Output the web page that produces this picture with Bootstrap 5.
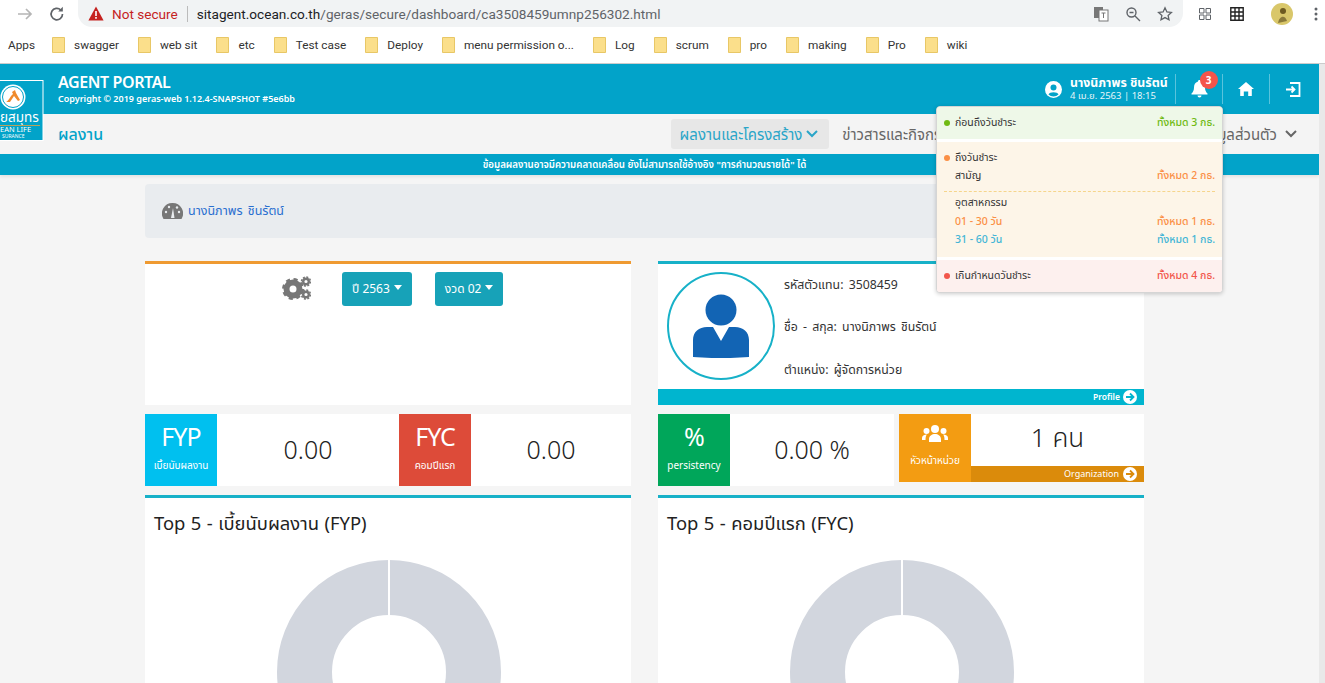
<!DOCTYPE html>
<html lang="th">
<head>
<meta charset="utf-8">
<title>Agent Portal</title>
<link href="https://cdn.jsdelivr.net/npm/bootstrap@5.3.0/dist/css/bootstrap.min.css" rel="stylesheet">
<style>
html,body{height:683px;overflow:hidden}
body{font-family:"Noto Sans","Noto Sans Thai","Open Sans","Liberation Sans",sans-serif;background:#f5f5f5;color:#333;font-size:13px;position:relative}
.chrome-top{height:32px;background:#fff;padding-left:15px}
.chrome-pill{margin-left:11px;width:1105px;height:27px;background:#f1f3f4;border-radius:0 0 14px 14px;padding:0 10px;font:13.6px Roboto,sans-serif;color:#5f6368}
.chrome-pill b{font-weight:400;color:#202124}
.notsec{color:#c5221f}
.sep-v{width:1px;height:16px;background:#bbb;margin:0 9px}
.bmbar{height:32px;background:#fff;border-bottom:1px solid #ccc;padding-left:8px;font:11.8px Roboto,sans-serif;color:#333;padding-bottom:5px}
.bmitem{gap:9px;margin-left:19px}
.appwrap{height:619px;position:relative}
.appmain{flex:1 1 auto;min-width:0;height:619px;overflow:hidden}
.scrolltrack{width:6px;background:#e9e9e9;height:619px}
.tophead{height:50px;background:#02a3c9;color:#fff;padding-left:58px;padding-right:3px}
.brand-t{font-size:16px;font-weight:600;line-height:20px;letter-spacing:-.4px}
.brand-s{font-size:9px;font-weight:600;line-height:14px}
.usr-name{font-size:12.3px;font-weight:700;line-height:14px}
.usr-date{font-size:9.5px;line-height:12px;opacity:.9}
.hd-cell{width:47px;height:30px;border-left:1px solid rgba(255,255,255,.35)}
.bell-badge{position:absolute;left:9px;top:-9px;width:18px;height:18px;border-radius:50%;background:#f4544a;font-size:10px;font-weight:700;line-height:18px;text-align:center;color:#fff}
.subhead{height:40px;background:#f4f4f4;padding-left:58px;padding-right:22px}
.sub-title{color:#02a3c9;font-size:16px;font-weight:500}
.menu-act{background:#e7e7e7;border-radius:3px;height:30px;color:#2aa5c8;font-size:15px;padding:0 11px 0 9px;margin-right:13px;gap:4px}
.menu-it{color:#666;font-size:15px}
.menu-spacer{width:358px;overflow:hidden;white-space:nowrap}
.notice{height:21px;background:#02a3c9;color:#fff;font-size:9.7px;font-weight:600;text-align:center;line-height:21px;box-shadow:0 2px 3px rgba(0,0,0,.08);padding-right:30px}
.pagebox{width:999px;margin-left:145px}
.crumb{height:54px;background:#e9ecef;border-radius:4px;margin-top:9px;width:1030px;padding-left:17px;color:#2a6fd0;font-size:12.5px;gap:5px;word-spacing:2px}
.gridrow{--bs-gutter-x:27px;--bs-gutter-y:0}
.topcard{background:#fff;height:144px;margin-top:23px;border-top:3px solid #ef9a31}
.topcard2{border-top-color:#17b1c8;position:relative}
.btn-year{background:#17a2b8;color:#fff;font-size:12px;height:34px;padding:0 10px;border-radius:3px;border:0;--bs-btn-hover-bg:#17a2b8;--bs-btn-hover-color:#fff}
.btn-year::after{border-top-width:5px;border-left-width:4.500px;border-right-width:4.500px;margin-left:4px;vertical-align:3px}
.filter-row{padding-top:8px;padding-left:137px}
.ava{width:108px;height:108px;border:2px solid #17b1c8;border-radius:50%;margin:8px 9px 0 9px;flex:none}
.pf-lines{color:#333;font-size:12.3px;padding-top:12px;word-spacing:2px}
.pf-line{height:42.3px}
.pf-bar{position:absolute;left:0;right:0;bottom:0;height:16px;background:#00b5cf;color:#fff;font-size:8.5px;font-weight:600;padding-right:7px;gap:3px}
.statrow{margin-top:9px}
.statpanel{background:#fff;height:72px}
.statbox{width:72px;height:72px;color:#fff;flex:none;text-align:center}
.statbox .big{font-size:25px;line-height:28px;letter-spacing:-1px;margin-bottom:8px;padding-top:8px;box-sizing:content-box}
.statbox .sm{font-size:10px;line-height:14px;white-space:nowrap;margin:0 -3px}
.statnum{font-size:25px;color:#222;text-align:center;font-weight:300}
.c-fyp{background:#00c0ef}.c-fyc{background:#dd4b39}.c-per{background:#00a65a}.c-lead{background:#f39c12}
.w-half{width:254px;flex:none}
.w-rest{flex:1 1 auto}
.w236{width:236px;flex:none;margin-right:5px}
.leadpanel{height:68px;background:#fff}
.leadnum{flex:1 1 auto;font-size:26px;color:#222;line-height:1;font-weight:300;padding-bottom:6px}
.leadbar{height:16px;background:#db8b0b;color:#fff;font-size:9px;padding-right:7px;gap:4px}
.leadic{margin:9px 0 8px;height:22px}
.chartcard{background:#fff;margin-top:9px;border-top:3px solid #17b1c8;height:300px;text-align:center}
.charttitle{font-size:18.4px;word-spacing:.7px;color:#222;text-align:left;padding:12px 9px 0;line-height:26px;height:62px;margin:0;font-weight:400}
.donutsvg{display:block;margin-left:calc(50% - 111px)}
.duepop{position:absolute;left:936px;top:42px;width:287px;height:187px;background:#fff;border:1px solid #d5d5d5;border-radius:4px;box-shadow:0 1px 4px rgba(0,0,0,.2);overflow:hidden;font-size:10.5px;color:#333}
.due-g{height:32px;background:#eef8e8;padding:0 7px}
.due-o{height:115px;background:#fdf5e8;margin-top:3px;padding:8px 7px 0}
.due-r{height:32px;background:#fdf0ee;margin-top:3px;padding:0 7px}
.dot{width:6px;height:6px;border-radius:50%;display:inline-block;margin-right:5px}
.lineh{height:18px;padding-left:11px}
.lineh-tall{height:19px}
.dashsep{border-top:1px dashed #f6d58c;margin:5px 0 3px}
.tg{color:#6fba12}.to{color:#fb8f45}.tb{color:#43b5d6}.tr{color:#f2564b}
.fw-m{font-weight:500}
</style>
</head>
<body>
<div class="chrome-top d-flex align-items-start">
  <svg width="20" height="20" viewBox="0 0 20 20" class="mt-1" style="flex:none"><path d="M3 10h13M11 5l5 5-5 5" fill="none" stroke="#b5b5b5" stroke-width="1.7"/></svg>
  <svg width="20" height="20" viewBox="0 0 20 20" class="mt-1" style="flex:none;margin-left:12px"><path d="M15.5 10a5.7 5.7 0 1 1-1.700-4" fill="none" stroke="#5f6368" stroke-width="1.7"/><path d="M15.8 2.800v4.600h-4.600z" fill="#5f6368"/></svg>
  <div class="chrome-pill d-flex align-items-center">
    <svg width="16" height="15" viewBox="0 0 16 15"><path d="M8 .5 15.6 14.500H.4z" fill="#c5221f"/><path d="M7.2 5h1.600v5H7.2zM7.2 11h1.600v1.700H7.2z" fill="#fff"/></svg>
    <span class="notsec ms-2">Not secure</span><span class="sep-v"></span>
    <span><b>sitagent.ocean.co.th</b>/geras/secure/dashboard/ca3508459umnp256302.html</span>
    <div class="ms-auto d-flex align-items-center gap-3">
      <svg width="16" height="16" viewBox="0 0 16 16"><rect x="1" y="1" width="9" height="11" fill="#777"/><rect x="6" y="4" width="9" height="11" fill="#fff" stroke="#777"/><path d="M8.500 7h4M10.500 7v5" stroke="#777"/></svg>
      <svg width="16" height="16" viewBox="0 0 16 16"><circle cx="6.500" cy="6.500" r="4.500" fill="none" stroke="#5f6368" stroke-width="1.400"/><path d="m10 10 5 5M4.500 6.500h4" stroke="#5f6368" stroke-width="1.400"/></svg>
      <svg width="16" height="16" viewBox="0 0 16 16"><path d="m8 1.800 1.900 4.100 4.500.5-3.300 3 .9 4.400L8 11.600l-4 2.200.9-4.400-3.300-3 4.500-.5z" fill="none" stroke="#5f6368" stroke-width="1.300"/></svg>
    </div>
  </div>
  <div class="d-flex align-items-center ms-3" style="height:27px;gap:19px">
    <svg width="12" height="12" viewBox="0 0 12 12"><path d="M.5.500h4.500v4.500H.5zM7 .5h4.500v4.500H7zM.5 7h4.500v4.500H.5zM7 7h4.500v4.500H7z" fill="none" stroke="#5f6368"/></svg>
    <svg width="14" height="14" viewBox="0 0 14 14"><path d="M.8.800h12.400v12.400H.8zM5 .8v12.400M9 .8v12.400M.8 5h12.400M.8 9h12.400" fill="none" stroke="#222" stroke-width="1.400"/></svg>
    <svg width="22" height="22" viewBox="0 0 22 22" style="margin-left:8px"><circle cx="11" cy="11" r="11" fill="#d9c76a"/><circle cx="12" cy="8" r="3" fill="#6d5a20"/><path d="M7 20c1-7 7-9 9-2z" fill="#8b7a3a"/></svg>
    <svg width="4" height="14" viewBox="0 0 4 14" style="margin-left:2px"><circle cx="2" cy="2" r="1.500" fill="#5f6368"/><circle cx="2" cy="7" r="1.500" fill="#5f6368"/><circle cx="2" cy="12" r="1.500" fill="#5f6368"/></svg>
  </div>
</div>
<div class="bmbar d-flex align-items-center">
  <span>Apps</span>
  <span class="d-flex align-items-center bmitem" style="margin-left:17px"><svg width="13" height="16" viewBox="0 0 13 16"><path d="M.5.500h12v15H.5z" fill="#fbdf8b" stroke="#e8c766"/></svg>swagger</span>
  <span class="d-flex align-items-center bmitem"><svg width="13" height="16" viewBox="0 0 13 16"><path d="M.5.500h12v15H.5z" fill="#fbdf8b" stroke="#e8c766"/></svg>web sit</span>
  <span class="d-flex align-items-center bmitem"><svg width="13" height="16" viewBox="0 0 13 16"><path d="M.5.500h12v15H.5z" fill="#fbdf8b" stroke="#e8c766"/></svg>etc</span>
  <span class="d-flex align-items-center bmitem"><svg width="13" height="16" viewBox="0 0 13 16"><path d="M.5.500h12v15H.5z" fill="#fbdf8b" stroke="#e8c766"/></svg>Test case</span>
  <span class="d-flex align-items-center bmitem"><svg width="13" height="16" viewBox="0 0 13 16"><path d="M.5.500h12v15H.5z" fill="#fbdf8b" stroke="#e8c766"/></svg>Deploy</span>
  <span class="d-flex align-items-center bmitem"><svg width="13" height="16" viewBox="0 0 13 16"><path d="M.5.500h12v15H.5z" fill="#fbdf8b" stroke="#e8c766"/></svg>menu permission o...</span>
  <span class="d-flex align-items-center bmitem"><svg width="13" height="16" viewBox="0 0 13 16"><path d="M.5.500h12v15H.5z" fill="#fbdf8b" stroke="#e8c766"/></svg>Log</span>
  <span class="d-flex align-items-center bmitem"><svg width="13" height="16" viewBox="0 0 13 16"><path d="M.5.500h12v15H.5z" fill="#fbdf8b" stroke="#e8c766"/></svg>scrum</span>
  <span class="d-flex align-items-center bmitem"><svg width="13" height="16" viewBox="0 0 13 16"><path d="M.5.500h12v15H.5z" fill="#fbdf8b" stroke="#e8c766"/></svg>pro</span>
  <span class="d-flex align-items-center bmitem"><svg width="13" height="16" viewBox="0 0 13 16"><path d="M.5.500h12v15H.5z" fill="#fbdf8b" stroke="#e8c766"/></svg>making</span>
  <span class="d-flex align-items-center bmitem"><svg width="13" height="16" viewBox="0 0 13 16"><path d="M.5.500h12v15H.5z" fill="#fbdf8b" stroke="#e8c766"/></svg>Pro</span>
  <span class="d-flex align-items-center bmitem"><svg width="13" height="16" viewBox="0 0 13 16"><path d="M.5.500h12v15H.5z" fill="#fbdf8b" stroke="#e8c766"/></svg>wiki</span>
</div>
<div class="appwrap d-flex">
  <div class="appmain">
    <div class="tophead d-flex align-items-center">
      <div>
        <div class="brand-t">AGENT PORTAL</div>
        <div class="brand-s">Copyright © 2019 geras-web 1.12.4-SNAPSHOT #5e6bb</div>
      </div>
      <div class="ms-auto d-flex align-items-center">
        <svg width="17" height="17" viewBox="0 0 17 17" class="me-2"><circle cx="8.500" cy="8.500" r="8.500" fill="#fff"/><circle cx="8.500" cy="6.500" r="3" fill="#02a3c9"/><path d="M3.500 13.500c1-3 9-3 10 0a7 7 0 0 1-10 0z" fill="#02a3c9"/></svg>
        <div style="width:105px">
          <div class="usr-name">นางนิภาพร ชินรัตน์</div>
          <div class="usr-date">4 เม.ย. 2563 | 18:15</div>
        </div>
        <div class="hd-cell d-flex align-items-center justify-content-center">
          <span class="position-relative d-block" style="height:18px">
            <svg width="17" height="18" viewBox="0 0 17 18" class="d-block"><path d="M8.500 0c1 0 1.500.6 1.500 1.400 3 .8 4 3.200 4 6 0 3 1 4.600 2.500 6v1H.5v-1C2 12 3 10.400 3 7.400c0-2.800 1-5.200 4-6C7 .6 7.500 0 8.500 0zM6.500 15.500h4a2 2 0 0 1-4 0z" fill="#fff"/></svg>
            <span class="bell-badge">3</span>
          </span>
        </div>
        <div class="hd-cell d-flex align-items-center justify-content-center">
          <svg width="16" height="14" viewBox="0 0 16 14"><path d="M8 0 16 7h-2.200v7h-3.600V9.500H5.800V14H2.200V7H0z" fill="#fff"/></svg>
        </div>
        <div class="hd-cell d-flex align-items-center justify-content-center">
          <svg width="16" height="15" viewBox="0 0 16 15"><path d="M5 1h9.500v13H5M1 7.500h8M6.500 4.500l3 3-3 3" fill="none" stroke="#fff" stroke-width="1.800"/></svg>
        </div>
      </div>
    </div>
    <div class="subhead d-flex align-items-center">
      <div class="sub-title">ผลงาน</div>
      <div class="ms-auto d-flex align-items-center">
        <div class="menu-act d-flex align-items-center">ผลงานและโครงสร้าง <svg width="12" height="8" viewBox="0 0 12 8"><path d="m1 1 5 5 5-5" fill="none" stroke="#2aa5c8" stroke-width="2"/></svg></div>
        <div class="menu-it menu-spacer">ข่าวสารและกิจกรรม</div>
        <div class="menu-it d-flex align-items-center gap-2">ข้อมูลส่วนตัว <svg width="12" height="8" viewBox="0 0 12 8"><path d="m1 1 5 5 5-5" fill="none" stroke="#666" stroke-width="2"/></svg></div>
      </div>
    </div>
    <div class="notice">ข้อมูลผลงานอาจมีความคลาดเคลื่อน ยังไม่สามารถใช้อ้างอิง "การคำนวณรายได้" ได้</div>
    <div class="pagebox">
      <div class="crumb d-flex align-items-center">
        <svg width="21" height="17" viewBox="0 0 21 17"><path d="M10.500 0a10.500 10.500 0 0 1 9 16H1.500a10.500 10.500 0 0 1 9-16z" fill="#777"/><path d="M9 15 11 5l1.500 10z" fill="#e9ecef"/><circle cx="4" cy="9" r="1.200" fill="#e9ecef"/><circle cx="17" cy="9" r="1.200" fill="#e9ecef"/><circle cx="7" cy="4" r="1.200" fill="#e9ecef"/><circle cx="15" cy="4.500" r="1.200" fill="#e9ecef"/></svg>
        <span>นางนิภาพร ชินรัตน์</span>
      </div>
      <div class="row gridrow">
        <div class="col-6">
          <div class="topcard">
            <div class="d-flex align-items-start filter-row">
              <svg width="29" height="24" viewBox="0 0 29 24" class="mt-1"><circle cx="11" cy="13" r="6.500" fill="none" stroke="#777" stroke-width="6"/><circle cx="11" cy="13" r="9.500" fill="none" stroke="#777" stroke-width="3" stroke-dasharray="4 3.500"/><circle cx="24" cy="5.500" r="2.800" fill="none" stroke="#777" stroke-width="2.400"/><circle cx="24" cy="5.500" r="4.500" fill="none" stroke="#777" stroke-width="1.500" stroke-dasharray="2 1.500"/><circle cx="24" cy="18.500" r="2.800" fill="none" stroke="#777" stroke-width="2.400"/><circle cx="24" cy="18.500" r="4.500" fill="none" stroke="#777" stroke-width="1.500" stroke-dasharray="2 1.500"/></svg>
              <button class="btn btn-year dropdown-toggle" style="margin-left:31px" type="button">ปี 2563</button>
              <button class="btn btn-year dropdown-toggle" style="margin-left:23px" type="button">งวด 02</button>
            </div>
          </div>
        </div>
        <div class="col-6">
          <div class="topcard topcard2 d-flex">
            <div class="ava d-flex align-items-center justify-content-center">
              <svg width="56" height="64" viewBox="0 0 56 64"><circle cx="28" cy="16" r="15.500" fill="#1264b4"/><path d="M14 33h6l8 14 8-14h6c8 0 14 5 14 13v17c-18 1.500-38 1.500-56 0V46c0-8 6-13 14-13z" fill="#1264b4"/></svg>
            </div>
            <div class="pf-lines">
              <div class="pf-line">รหัสตัวแทน: 3508459</div>
              <div class="pf-line">ชื่อ - สกุล: นางนิภาพร ชินรัตน์</div>
              <div class="pf-line">ตำแหน่ง: ผู้จัดการหน่วย</div>
            </div>
            <div class="pf-bar d-flex align-items-center justify-content-end">Profile
              <svg width="14" height="14" viewBox="0 0 14 14"><circle cx="7" cy="7" r="7" fill="#fff"/><path d="M3 7h7M7 3.500 10.500 7 7 10.500" fill="none" stroke="#00b5cf" stroke-width="1.800"/></svg>
            </div>
          </div>
        </div>
      </div>
      <div class="row gridrow statrow">
        <div class="col-6">
          <div class="statpanel d-flex">
            <div class="d-flex w-half">
              <div class="statbox c-fyp"><div class="big">FYP</div><div class="sm">เบี้ยนับผลงาน</div></div>
              <div class="statnum flex-grow-1 d-flex align-items-center justify-content-center">0.00</div>
            </div>
            <div class="d-flex w-rest">
              <div class="statbox c-fyc"><div class="big">FYC</div><div class="sm">คอมปีแรก</div></div>
              <div class="statnum flex-grow-1 d-flex align-items-center justify-content-center">0.00</div>
            </div>
          </div>
        </div>
        <div class="col-6 d-flex align-items-start">
          <div class="statpanel d-flex w236">
            <div class="statbox c-per"><div class="big">%</div><div class="sm">persistency</div></div>
            <div class="statnum flex-grow-1 d-flex align-items-center justify-content-center">0.00 %</div>
          </div>
          <div class="leadpanel d-flex flex-grow-1">
            <div class="statbox c-lead" style="height:68px">
              <div class="leadic"><svg width="26" height="17" viewBox="0 0 26 17"><circle cx="13" cy="4" r="4" fill="#fff"/><circle cx="4.500" cy="6" r="3" fill="#fff"/><circle cx="21.500" cy="6" r="3" fill="#fff"/><path d="M7 17v-3c0-3 3-5 6-5s6 2 6 5v3zM0 15v-2c0-2 2-3.500 5-3.500-1 1-1.500 2.500-1.500 5.500zM26 15v-2c0-2-2-3.500-5-3.500 1 1 1.500 2.500 1.500 5.500z" fill="#fff"/></svg></div>
              <div class="sm">หัวหน้าหน่วย</div>
            </div>
            <div class="d-flex flex-column flex-grow-1">
              <div class="leadnum d-flex align-items-center justify-content-center">1 คน</div>
              <div class="leadbar d-flex align-items-center justify-content-end">Organization
                <svg width="14" height="14" viewBox="0 0 14 14"><circle cx="7" cy="7" r="7" fill="#fff"/><path d="M3 7h7M7 3.500 10.500 7 7 10.500" fill="none" stroke="#db8b0b" stroke-width="1.800"/></svg>
              </div>
            </div>
          </div>
        </div>
      </div>
      <div class="row gridrow">
        <div class="col-6">
          <div class="chartcard">
            <h2 class="charttitle">Top 5 - เบี้ยนับผลงาน (FYP)</h2>
            <svg class="donutsvg" width="224" height="224" viewBox="0 0 224 224"><circle cx="112" cy="112" r="84.500" fill="none" stroke="#d2d6de" stroke-width="55"/><rect x="111" y="0" width="2" height="56" fill="#fff"/></svg>
          </div>
        </div>
        <div class="col-6">
          <div class="chartcard">
            <h2 class="charttitle">Top 5 - คอมปีแรก (FYC)</h2>
            <svg class="donutsvg" width="224" height="224" viewBox="0 0 224 224"><circle cx="112" cy="112" r="84.500" fill="none" stroke="#d2d6de" stroke-width="55"/><rect x="111" y="0" width="2" height="56" fill="#fff"/></svg>
          </div>
        </div>
      </div>
    </div>
  </div>
  <div class="scrolltrack"></div>
  <svg width="44" height="62" viewBox="0 0 44 62" class="position-absolute" style="left:0;top:16px"><rect x="-2" y=".5" width="45" height="60" fill="#02a3c9" stroke="#fff"/><circle cx="13" cy="17" r="12.500" fill="#fff"/><circle cx="13" cy="17" r="10.500" fill="none" stroke="#02a3c9"/><path d="M6 22c3-1 4-6 7-8l-1-2 3-2 1 3 4 7-2 1-4-5-4 6z" fill="#f08a2c"/><text x="0" y="42" fill="#fff" font-size="13.500">ยสมุทร</text><rect x="0" y="45" width="40" height="1" fill="#b9a35c"/><text x="0" y="52" fill="#fff" font-size="7.500">EAN LIFE</text><text x="2" y="57.500" fill="#fff" font-size="5">SURANCE</text></svg>
  <div class="duepop">
    <div class="due-g d-flex align-items-center justify-content-between"><span><i class="dot" style="background:#6fba12"></i>ก่อนถึงวันชำระ</span><span class="tg fw-m">ทั้งหมด 3 กธ.</span></div>
    <div class="due-o">
      <div style="height:18px"><i class="dot" style="background:#fb8f45"></i>ถึงวันชำระ</div>
      <div class="lineh d-flex justify-content-between"><span>สามัญ</span><span class="to fw-m">ทั้งหมด 2 กธ.</span></div>
      <div class="dashsep"></div>
      <div class="lineh lineh-tall">อุตสาหกรรม</div>
      <div class="lineh d-flex justify-content-between"><span class="to fw-m">01 - 30 วัน</span><span class="to fw-m">ทั้งหมด 1 กธ.</span></div>
      <div class="lineh d-flex justify-content-between"><span class="tb fw-m">31 - 60 วัน</span><span class="tb fw-m">ทั้งหมด 1 กธ.</span></div>
    </div>
    <div class="due-r d-flex align-items-center justify-content-between"><span><i class="dot" style="background:#f2564b"></i>เกินกำหนดวันชำระ</span><span class="tr fw-m">ทั้งหมด 4 กธ.</span></div>
  </div>
</div>
<script src="https://cdn.jsdelivr.net/npm/bootstrap@5.3.0/dist/js/bootstrap.bundle.min.js"></script>
</body>
</html>
